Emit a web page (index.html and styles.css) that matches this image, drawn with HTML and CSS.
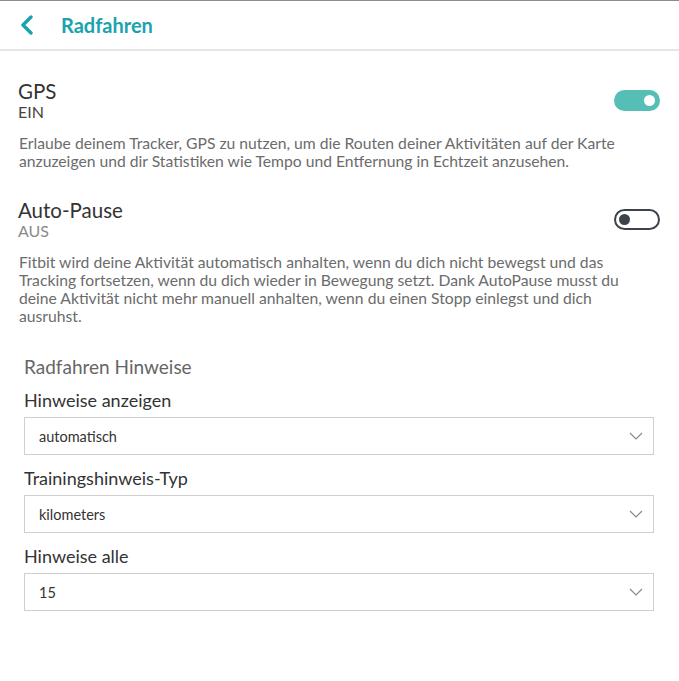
FILE: index.html
```html
<!DOCTYPE HTML>
<html>
	<head>
		<title>Radfahren</title>
		<link rel="stylesheet" href="styles.css">
	</head>
	<body>
		<div class="header">
			<span class="back">
				<svg width="14" height="20" viewBox="0 0 14 20"><path d="M11 2 L3 10 L11 18" fill="none" stroke="#1aa3ae" stroke-width="3.4" stroke-linecap="round" stroke-linejoin="round"/></svg>
			</span>
			<h1>Radfahren</h1>
		</div>
		<div class="content">
			<div class="setting">
				<div class="setting-head">
					<div>
						<div class="setting-title">GPS</div>
						<div class="setting-state on">EIN</div>
					</div>
					<div class="toggle on"><span class="knob"></span></div>
				</div>
				<p class="setting-text">Erlaube deinem Tracker, GPS zu nutzen, um die Routen deiner Aktivitäten auf der Karte anzuzeigen und dir Statistiken wie Tempo und Entfernung in Echtzeit anzusehen.</p>
			</div>
			<div class="setting">
				<div class="setting-head">
					<div>
						<div class="setting-title">Auto-Pause</div>
						<div class="setting-state">AUS</div>
					</div>
					<div class="toggle"><span class="knob"></span></div>
				</div>
				<p class="setting-text">Fitbit wird deine Aktivität automatisch anhalten, wenn du dich nicht bewegst und das Tracking fortsetzen, wenn du dich wieder in Bewegung setzt. Dank AutoPause musst du deine Aktivität nicht mehr manuell anhalten, wenn du einen Stopp einlegst und dich ausruhst.</p>
			</div>
			<div class="hints">
				<h2>Radfahren Hinweise</h2>
				<label class="field-label">Hinweise anzeigen</label>
				<div class="select"><span>automatisch</span><svg width="14" height="8" viewBox="0 0 14 8"><path d="M1 1 L7 7 L13 1" fill="none" stroke="#8a8a8a" stroke-width="1.2"/></svg></div>
				<label class="field-label">Trainingshinweis-Typ</label>
				<div class="select"><span>kilometers</span><svg width="14" height="8" viewBox="0 0 14 8"><path d="M1 1 L7 7 L13 1" fill="none" stroke="#8a8a8a" stroke-width="1.2"/></svg></div>
				<label class="field-label">Hinweise alle</label>
				<div class="select"><span>15</span><svg width="14" height="8" viewBox="0 0 14 8"><path d="M1 1 L7 7 L13 1" fill="none" stroke="#8a8a8a" stroke-width="1.2"/></svg></div>
			</div>
		</div>
	</body>
</html>
```
FILE: styles.css
```css
body {
	margin: 0;
	font-family: Lato, "Open Sans", sans-serif;
	background: #fff;
	color: #333;
}
.header {
	display: flex;
	align-items: center;
	height: 48px;
	border-top: 1px solid #8c8c8c;
	border-bottom: 2px solid #e5e5e5;
	padding-left: 20px;
}
.back {
	display: flex;
	width: 41px;
}
h1 {
	margin: 0;
	font-size: 20px;
	font-weight: 700;
	color: #1aa3ae;
}
.content {
	padding: 28px 19px 0 18px;
}
.setting-head {
	display: flex;
	justify-content: space-between;
	align-items: center;
}
.setting-title {
	font-size: 20.5px;
	line-height: 24px;
	color: #333;
}
.setting-state {
	font-size: 16px;
	line-height: 18px;
	color: #8a8a8a;
}
.setting-state.on {
	color: #444;
}
.setting-text {
	margin: 13px 30px 28px 1px;
	font-size: 15.7px;
	line-height: 18px;
	color: #6b6b6b;
}
.toggle {
	position: relative;
	box-sizing: border-box;
	width: 46px;
	height: 21px;
	border: 2px solid #3d434a;
	border-radius: 11px;
}
.toggle .knob {
	position: absolute;
	top: 3px;
	left: 3px;
	width: 11px;
	height: 11px;
	border-radius: 50%;
	background: #3d434a;
}
.toggle.on {
	border-color: #55bfb6;
	background: #55bfb6;
}
.toggle.on .knob {
	left: auto;
	right: 3px;
	background: #fff;
}
.hints {
	padding: 2px 6px 0 6px;
}
h2 {
	margin: 0 0 11px 0;
	font-size: 19px;
	font-weight: 400;
	color: #666;
}
.field-label {
	display: block;
	font-size: 18px;
	line-height: 22px;
	color: #333;
	margin-bottom: 6px;
}
.select {
	display: flex;
	justify-content: space-between;
	align-items: center;
	box-sizing: border-box;
	height: 38px;
	border: 1px solid #cfcfcf;
	padding: 0 10px 0 14px;
	font-size: 14.5px;
	color: #333;
	margin-bottom: 12px;
}
```
